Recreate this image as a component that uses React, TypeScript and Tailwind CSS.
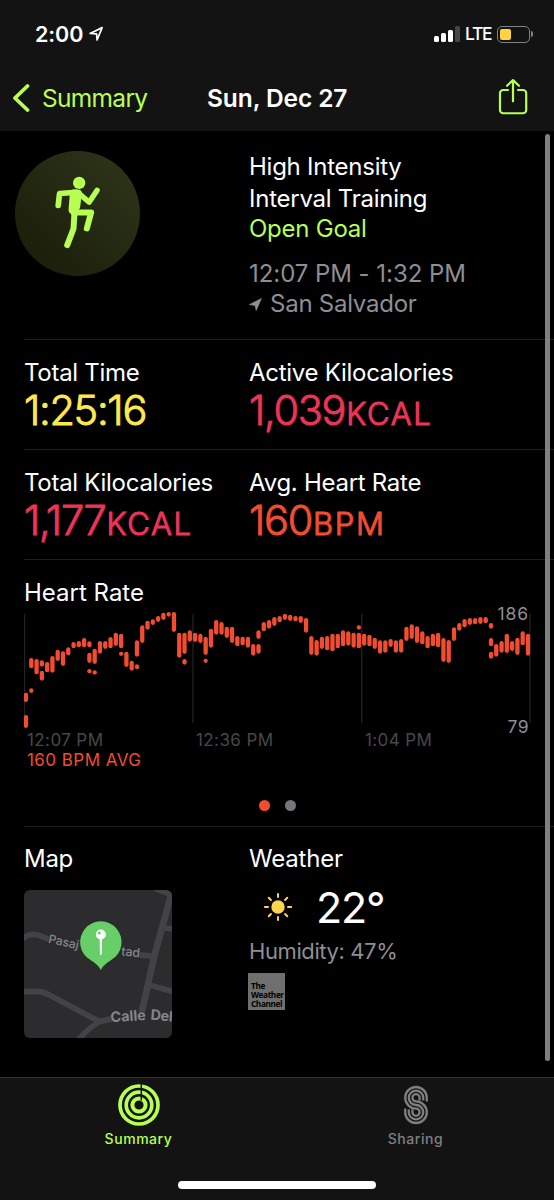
import React from "react";

type Range = [number, number];

const heartRate: Range[][] = [
  [[278, 306], [345, 384]], [[174, 205], [265, 279]], [[177, 223]], [[181, 200], [212, 242]],
  [[186, 217]], [[168, 218]], [[149, 183]], [[154, 198]], [[142, 166]], [[126, 145]],
  [[123, 142]], [[114, 142]], [[124, 142], [158, 189], [207, 220]], [[146, 192], [211, 224]],
  [[123, 161]], [[123, 147]], [[111, 145]], [[98, 138]], [[101, 145], [155, 168]], [[155, 201]],
  [[182, 212]], [[121, 170], [193, 208]], [[76, 129]], [[62, 89]], [[58, 75]], [[48, 66]],
  [[38, 60]], [[36, 50]], [[36, 96]], [[98, 173]], [[98, 162], [177, 194]], [[91, 125]],
  [[98, 126]], [[101, 129]], [[110, 165], [176, 189]], [[86, 143]], [[60, 104]], [[66, 104]],
  [[80, 114]], [[80, 129]], [[108, 139]], [[110, 136]], [[110, 143]], [[132, 167]],
  [[91, 117], [132, 161]], [[66, 94]], [[60, 86]], [[51, 78]], [[48, 67]], [[41, 60]],
  [[44, 63]], [[48, 64]], [[48, 69]], [[54, 98]], [[108, 165]], [[120, 167]], [[110, 147]],
  [[108, 151]], [[101, 154]], [[101, 145]], [[91, 139]], [[94, 137]], [[98, 143]],
  [[76, 89], [98, 145]], [[101, 137]], [[104, 139]], [[113, 147]], [[121, 161]], [[121, 158]],
  [[117, 141]], [[121, 158]], [[117, 158]], [[80, 123]], [[73, 117]], [[79, 129]], [[94, 133]],
  [[108, 145]], [[101, 139]], [[98, 142]], [[114, 186]], [[120, 189]], [[82, 123]], [[69, 92]],
  [[57, 82]], [[54, 75]], [[54, 73]], [[51, 72]], [[51, 70]], [[69, 86], [114, 139], [155, 176]],
  [[132, 170]], [[123, 158]], [[101, 159]], [[123, 153]], [[113, 165]], [[94, 136]], [[101, 167]],
];

const StatusBar = () => (
  <div className="flex h-[66px] items-center justify-between pl-[35px] pr-[21px] pt-[2px]">
    <div className="flex items-center gap-[6px]">
      <span className="text-[21.5px] font-semibold leading-6 tracking-[-0.1px]">2:00</span>
      <svg width="15" height="16" viewBox="0 0 16 16" fill="none" stroke="#fff" strokeWidth="1.8" strokeLinejoin="round">
        <path d="M1.2 7.4 14 1.2 8.6 14.4 8.1 7.9Z" />
      </svg>
    </div>
    <div className="flex items-center">
      <div className="flex items-end gap-[2px]">
        <div className="h-[6px] w-[5px] rounded-[1.5px] bg-white" />
        <div className="h-[9px] w-[5px] rounded-[1.5px] bg-white" />
        <div className="h-[12px] w-[5px] rounded-[1.5px] bg-white" />
        <div className="h-[16px] w-[5px] rounded-[1.5px] bg-[#464646]" />
      </div>
      <span className="ml-[5px] mr-[5px] w-[27px] text-[17.5px] font-medium leading-6 tracking-[-1.3px]">LTE</span>
      <div className="flex h-[17px] w-[33px] items-center rounded-[5px] border-[1.5px] border-[#828282] pl-[2px]">
        <div className="h-[11px] w-[11px] rounded-[2px] bg-[#ffd43e]" />
      </div>
      <div className="ml-[1px] h-[6px] w-[2px] rounded-r-full bg-[#828282]" />
    </div>
  </div>
);

const NavBar = () => (
  <div className="grid h-[64px] grid-cols-[208px_1fr_auto] items-center pl-[12px] pr-[26px]">
    <div className="flex items-center gap-[12px] text-[#b8ff54]">
      <svg width="18" height="30" viewBox="0 0 18 30" fill="none" stroke="currentColor" strokeWidth="3.8" strokeLinecap="round" strokeLinejoin="round">
        <path d="M15.5 3 3 15 15.5 27" />
      </svg>
      <span className="text-[24.5px] leading-[30px] tracking-[-0.7px]">Summary</span>
    </div>
    <h1 className="-ml-[13px] whitespace-nowrap text-[24.5px] font-semibold leading-[30px] tracking-[-0.1px]">Sun, Dec 27</h1>
    <svg width="30" height="37" viewBox="0 0 30 38" preserveAspectRatio="none" className="-mt-[3px]" fill="none" stroke="#b8ff54" strokeWidth="2.2" strokeLinecap="round" strokeLinejoin="round">
      <path d="M10 12.3H5.2A3.2 3.2 0 0 0 2 15.5V33a3.2 3.2 0 0 0 3.2 3.2H25A3.2 3.2 0 0 0 28.2 33V15.5A3.2 3.2 0 0 0 25 12.3H20" />
      <path d="M15 24V2.5M9 8 15 2.2 21 8" />
    </svg>
  </div>
);

const WorkoutIcon = () => (
  <div className="flex h-[125px] w-[125px] items-center justify-center rounded-full bg-linear-to-tr from-[#191b08] to-[#2f371b]">
    <svg width="125" height="125" viewBox="45 32 376 376" fill="none" stroke="#b8ff54" strokeLinecap="round" strokeLinejoin="round">
      <circle cx="238" cy="128" r="18.5" fill="#b8ff54" stroke="none" />
      <path d="M175 196 179 160 230 156" strokeWidth="17" />
      <path d="M236 158 268 186 292 150" strokeWidth="16" />
      <path d="M222 160 234 160 229 200 218 210Z" fill="#b8ff54" strokeWidth="24" />
      <path d="M222 217 274 217 261 265" strokeWidth="18" />
      <path d="M224 215 221 266 202 315" strokeWidth="18" />
    </svg>
  </div>
);

type StatProps = {
  label: string;
  value: string;
  unit?: string;
  color: string;
};

const Stat: React.FC<StatProps> = ({ label, value, unit, color }) => (
  <div className={`whitespace-nowrap ${color}`}>
    <p className="text-[24px] leading-[30px] tracking-[-0.28px] text-white">{label}</p>
    <p className="-mt-[1px] text-[41.5px] font-light leading-[46px] tracking-[-1.3px] [-webkit-text-stroke:0.9px_currentColor]">
      {value}
      {unit && <span className="ml-[1px] text-[31px] tracking-[1.7px] [-webkit-text-stroke:1.1px_currentColor]">{unit}</span>}
    </p>
  </div>
);

const StatRow = ({ children }: { children: React.ReactNode }) => (
  <div className="ml-[24px] grid h-[110px] grid-cols-[225px_1fr] border-t border-[#1f1f21] pt-[18px]">{children}</div>
);

const HeartRateChart = () => (
  <section className="ml-[24px] h-[267px] border-t border-[#1f1f21] pt-[18px]">
    <h2 className="text-[24px] leading-[30px] tracking-[0px]">Heart Rate</h2>
    <div className="relative -mt-[1px] w-[508px]">
      <svg width="508" height="123" viewBox="24 607 508 123" className="block">
        {[24.5, 193, 361.7, 530].map((x) => (
          <path key={x} d={`M${x} 614V723`} stroke="#232325" strokeWidth="1.3" />
        ))}
        {heartRate.map((ranges, i) =>
          ranges.map(([top, bottom]) => (
            <rect
              key={`${i}-${top}`}
              x={26 + i * 5.284 - 2.15}
              y={600 + top / 3}
              width="4.3"
              height={(bottom - top) / 3}
              rx="2.15"
              fill="#f24c31"
            />
          ))
        )}
      </svg>
      <span className="absolute right-[3px] top-[-3px] text-[17.5px] leading-5 tracking-[0.9px] text-[#8e8e93]">186</span>
      <span className="absolute right-[3px] top-[110px] text-[17.5px] leading-5 tracking-[0.5px] text-[#8e8e93]">79</span>
    </div>
    <div className="grid grid-cols-[169px_169px_1fr] pl-[3px] text-[17px] leading-5 tracking-[0.4px] text-[#48484a]">
      <span>12:07 PM</span>
      <span>12:36 PM</span>
      <span>1:04 PM</span>
    </div>
    <p className="pl-[3px] text-[17px] leading-5 tracking-[0.45px] text-[#f24c31]">160 BPM AVG</p>
    <div className="mt-[30px] flex gap-[15px] pl-[235px]">
      <div className="h-[11px] w-[11px] rounded-full bg-[#f24c31]" />
      <div className="h-[11px] w-[11px] rounded-full bg-[#77777b]" />
    </div>
  </section>
);

const MapPreview = () => (
  <svg width="148" height="148" viewBox="42 152 443 443" className="mt-[16px] block rounded-[6px] bg-[#2c2c2e]" fill="none">
    <g stroke="#434347" strokeWidth="17" strokeLinejoin="round">
      <path d="M30 302 52 289Q70 280 92 290L125 303" />
      <path d="M380 346 430 350" />
      <path d="M30 456H88Q102 457 118 466L268 546 305 537" />
      <path d="M268 546Q235 565 205 600" />
      <path d="M484 160 432 350 394 520" strokeWidth="20" />
      <path d="M435 148 490 168M458 265 495 270M415 436 495 458" />
    </g>
    <g fontFamily="Inter, sans-serif" fill="#85858a" stroke="#2c2c2e" strokeWidth="4" paintOrder="stroke">
      <text x="113" y="310" fontSize="36" fontWeight="500" transform="rotate(12 113 310)">Pasaj</text>
      <text x="332" y="348" fontSize="37" fontWeight="500" transform="rotate(5 332 348)">tad</text>
      <text x="302" y="548" fontSize="43" fontWeight="700" transform="rotate(-4 302 548)">Calle</text>
      <text x="420" y="540" fontSize="43" fontWeight="700" letterSpacing="-1" transform="rotate(5 420 540)">Del</text>
    </g>
    <path d="M272 392C266 378 254 371 240 361A62 62 0 1 1 304 361C290 371 278 378 272 392Z" fill="#68ce67" />
    <path d="M268 290H276L274.5 344Q272 349 269.5 344Z" fill="#fff" />
    <circle cx="272" cy="285" r="15" fill="#fff" />
    <circle cx="267" cy="281" r="4.5" fill="#68ce67" />
  </svg>
);

const Sun = () => (
  <svg width="30" height="30" viewBox="-15 -15 30 30">
    <circle r="6.7" fill="#ffd550" />
    {[0, 45, 90, 135, 180, 225, 270, 315].map((angle) => (
      <path key={angle} d="M0 -10V-13.1" stroke="#ffd550" strokeWidth="2" strokeLinecap="round" transform={`rotate(${angle})`} />
    ))}
  </svg>
);

const Weather = () => (
  <div>
    <h2 className="text-[24px] leading-[30px] tracking-[-0.2px]">Weather</h2>
    <div className="flex h-[66px] items-center pl-[14px]">
      <Sun />
      <span className="ml-[23px] text-[43px] leading-[50px] tracking-[-1.2px]">22°</span>
    </div>
    <p className="text-[22px] leading-[22px] tracking-[-0.4px] text-[#8e8e93]">Humidity: 47%</p>
    <div className="-ml-[1px] mt-[11px] flex h-[37px] w-[37px] flex-col justify-end bg-[#6f6f6f] pb-[2px] pl-[3px] font-['Open_Sans',sans-serif] text-[8.2px] font-bold leading-[9px] tracking-[-0.35px] text-black">
      <span>The</span>
      <span>Weather</span>
      <span>Channel</span>
    </div>
  </div>
);

const RingsIcon = () => (
  <svg width="42" height="42" viewBox="-21 -21 42 42" fill="none" stroke="#b8ff54">
    <circle r="19" strokeWidth="3.7" />
    <circle r="12.8" strokeWidth="3.7" />
    <circle r="6.6" strokeWidth="4" />
    <path d="M2.3 -21V-4.5" stroke="#131313" strokeWidth="1.5" />
  </svg>
);

const SharingIcon = () => (
  <svg width="28" height="42" viewBox="-14 -21 28 42" fill="none" stroke="#7f7f7f" strokeWidth="2.3">
    <path d="M10.8 -3.5V-7.2A10.8 10.8 0 1 0 0 3.6A3.6 3.6 0 1 1 -3.6 7.2V4.5" />
    <path d="M7.2 -4.5V-7.2A7.2 7.2 0 1 0 0 0A7.2 7.2 0 1 1 -7.2 7.2V4.5" />
    <path d="M3.6 -4.5V-7.2A3.6 3.6 0 1 0 0 -3.6A10.8 10.8 0 1 1 -10.8 7.2V3.5" />
  </svg>
);

const TabBar = () => (
  <nav className="flex h-[123px] flex-col items-center justify-between border-t border-[#343434] bg-[#131313] pb-[11px] pt-[6px]">
    <div className="grid w-full grid-cols-2 text-[14px] font-medium leading-5 tracking-[0.55px]">
      <div className="flex flex-col items-center gap-[3px] text-[#b8ff54]">
        <RingsIcon />
        <span>Summary</span>
      </div>
      <div className="flex flex-col items-center gap-[3px] text-[#7f7f7f]">
        <SharingIcon />
        <span>Sharing</span>
      </div>
    </div>
    <div className="h-[8px] w-[198px] rounded-full bg-white" />
  </nav>
);

export default function App() {
  return (
    <div className="relative flex h-[1200px] w-[554px] flex-col overflow-hidden bg-black font-['Inter',sans-serif] text-white">
      <header className="h-[131px] bg-[#131313]">
        <StatusBar />
        <NavBar />
      </header>
      <main className="h-[946px]">
        <section className="flex h-[208px] pl-[15px] pt-[20px]">
          <div className="w-[234px]">
            <WorkoutIcon />
          </div>
          <div className="text-[24px] leading-[30px] tracking-[-0.25px]">
            <p className="leading-[32px]">
              High Intensity
              <br />
              Interval Training
            </p>
            <p className="-mt-[1px]">
              <span className="text-[#b8ff54]">Open Goal</span>
            </p>
            <p className="mt-[15px] tracking-[-0.05px] text-[#8e8e93]">12:07 PM - 1:32 PM</p>
            <p className="flex items-center gap-[8px] text-[#8e8e93]">
              <svg width="13" height="13" viewBox="0 0 13 13" fill="currentColor" stroke="currentColor" strokeWidth="0.6" strokeLinejoin="round">
                <path d="M0.4 6.6 12.5 0.4 7.2 12.6 6 7.5Z" />
              </svg>
              San Salvador
            </p>
          </div>
        </section>
        <StatRow>
          <Stat label="Total Time" value="1:25:16" color="text-[#ffe84f]" />
          <Stat label="Active Kilocalories" value="1,039" unit="KCAL" color="text-[#ec3458]" />
        </StatRow>
        <StatRow>
          <Stat label="Total Kilocalories" value="1,177" unit="KCAL" color="text-[#ec3458]" />
          <Stat label="Avg. Heart Rate" value="160" unit="BPM" color="text-[#f24c31]" />
        </StatRow>
        <HeartRateChart />
        <section className="ml-[24px] grid grid-cols-[225px_1fr] border-t border-[#1f1f21] pt-[17px]">
          <div>
            <h2 className="text-[24px] leading-[30px] tracking-[-0.3px]">Map</h2>
            <MapPreview />
          </div>
          <Weather />
        </section>
      </main>
      <TabBar />
      {/* scroll indicator */}
      <div className="absolute right-[4px] top-[134px] h-[927px] w-[5px] rounded-full bg-[#808080]" />
    </div>
  );
}
